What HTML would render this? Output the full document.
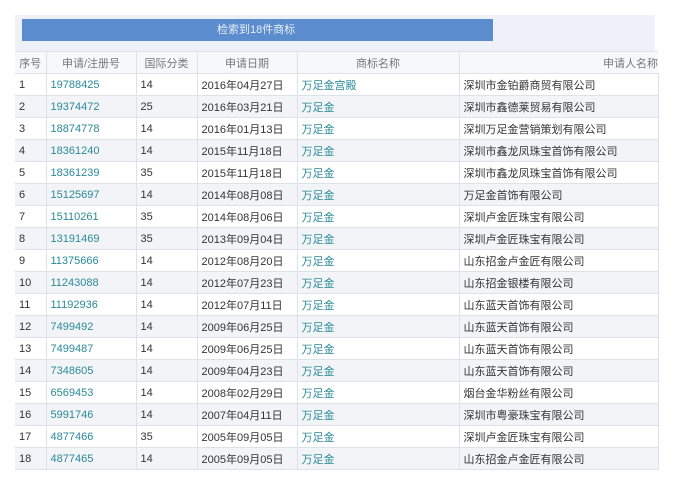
<!DOCTYPE html>
<html><head><meta charset="utf-8"><style>
body{margin:0;width:674px;height:491px;background:#fff;font-family:"Liberation Sans","Noto Sans CJK SC",sans-serif;overflow:hidden;position:relative}
.panel{position:absolute;left:15px;top:15px;width:640px;height:36px;background:#eef2f8}
.bar{position:absolute;left:22px;top:19px;width:471px;height:22px;background:#5b8ccd;color:#e8eef8;font-size:11px;line-height:22px}
.bar span{position:absolute;left:195px}
table{position:absolute;left:15px;top:51px;border-collapse:collapse;font-size:11px;color:#333;table-layout:fixed;width:643px}
td{height:21px;border:1px solid #dde2ea;border-left:none;padding:0 0 0 4px;white-space:nowrap;overflow:hidden}
tr.h td{color:#777;text-align:center;padding:0;background:#f7f8fa}
tr:nth-child(odd):not(.h) td{background:#f2f4f8}
.l{color:#2a8a9a}
</style></head><body>
<div class="panel"></div>
<div class="bar"><span>检索到18件商标</span></div>
<table>
<colgroup><col style="width:31px"><col style="width:90px"><col style="width:61px"><col style="width:100px"><col style="width:162px"><col style="width:199px"></colgroup>
<tr class="h"><td>序号</td><td>申请/注册号</td><td>国际分类</td><td>申请日期</td><td>商标名称</td><td style="text-align:right;border-right:none">申请人名称</td></tr>
<tr><td>1</td><td class="l">19788425</td><td>14</td><td>2016年04月27日</td><td class="l">万足金宫殿</td><td>深圳市金铂爵商贸有限公司</td></tr>
<tr><td>2</td><td class="l">19374472</td><td>25</td><td>2016年03月21日</td><td class="l">万足金</td><td>深圳市鑫德莱贸易有限公司</td></tr>
<tr><td>3</td><td class="l">18874778</td><td>14</td><td>2016年01月13日</td><td class="l">万足金</td><td>深圳万足金营销策划有限公司</td></tr>
<tr><td>4</td><td class="l">18361240</td><td>14</td><td>2015年11月18日</td><td class="l">万足金</td><td>深圳市鑫龙凤珠宝首饰有限公司</td></tr>
<tr><td>5</td><td class="l">18361239</td><td>35</td><td>2015年11月18日</td><td class="l">万足金</td><td>深圳市鑫龙凤珠宝首饰有限公司</td></tr>
<tr><td>6</td><td class="l">15125697</td><td>14</td><td>2014年08月08日</td><td class="l">万足金</td><td>万足金首饰有限公司</td></tr>
<tr><td>7</td><td class="l">15110261</td><td>35</td><td>2014年08月06日</td><td class="l">万足金</td><td>深圳卢金匠珠宝有限公司</td></tr>
<tr><td>8</td><td class="l">13191469</td><td>35</td><td>2013年09月04日</td><td class="l">万足金</td><td>深圳卢金匠珠宝有限公司</td></tr>
<tr><td>9</td><td class="l">11375666</td><td>14</td><td>2012年08月20日</td><td class="l">万足金</td><td>山东招金卢金匠有限公司</td></tr>
<tr><td>10</td><td class="l">11243088</td><td>14</td><td>2012年07月23日</td><td class="l">万足金</td><td>山东招金银楼有限公司</td></tr>
<tr><td>11</td><td class="l">11192936</td><td>14</td><td>2012年07月11日</td><td class="l">万足金</td><td>山东蓝天首饰有限公司</td></tr>
<tr><td>12</td><td class="l">7499492</td><td>14</td><td>2009年06月25日</td><td class="l">万足金</td><td>山东蓝天首饰有限公司</td></tr>
<tr><td>13</td><td class="l">7499487</td><td>14</td><td>2009年06月25日</td><td class="l">万足金</td><td>山东蓝天首饰有限公司</td></tr>
<tr><td>14</td><td class="l">7348605</td><td>14</td><td>2009年04月23日</td><td class="l">万足金</td><td>山东蓝天首饰有限公司</td></tr>
<tr><td>15</td><td class="l">6569453</td><td>14</td><td>2008年02月29日</td><td class="l">万足金</td><td>烟台金华粉丝有限公司</td></tr>
<tr><td>16</td><td class="l">5991746</td><td>14</td><td>2007年04月11日</td><td class="l">万足金</td><td>深圳市粤豪珠宝有限公司</td></tr>
<tr><td>17</td><td class="l">4877466</td><td>35</td><td>2005年09月05日</td><td class="l">万足金</td><td>深圳卢金匠珠宝有限公司</td></tr>
<tr><td>18</td><td class="l">4877465</td><td>14</td><td>2005年09月05日</td><td class="l">万足金</td><td>山东招金卢金匠有限公司</td></tr>
</table>
</body></html>
